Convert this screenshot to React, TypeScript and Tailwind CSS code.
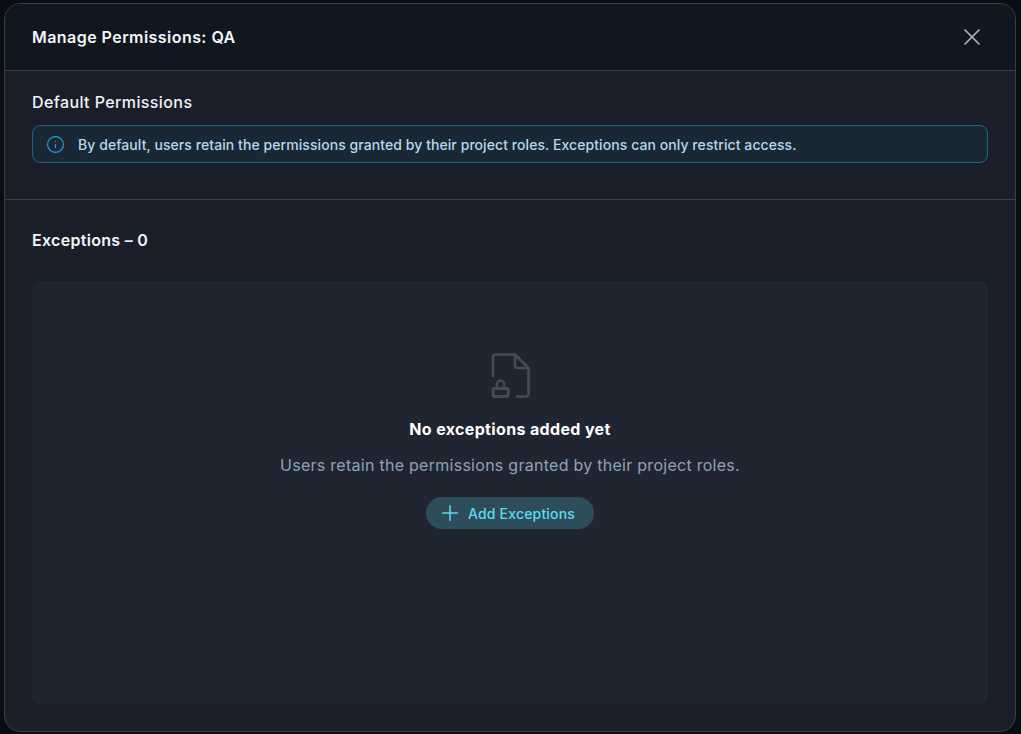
import { Info, X } from 'lucide-react';

function FileLockIcon() {
  return (
    <svg width="40" height="46" viewBox="0 0 40 46" fill="none" stroke="#454b56" strokeWidth="2.600" strokeLinejoin="round" strokeLinecap="round">
      <path d="M3 23V4A2.500 2.500 0 0 1 5.500 1.500H25L38.500 15V41A2.500 2.500 0 0 1 36 43.500H27" />
      <path d="M25 1.500V12.500A2.500 2.500 0 0 0 27.500 15H38.500" />
      <rect x="3.200" y="35.500" width="15" height="8" rx="1.500" strokeWidth="3" />
      <path d="M7 35.500V31.500A3.700 3.700 0 0 1 14.400 31.500V35.500" />
    </svg>
  );
}

function PlusIcon() {
  return (
    <svg width="16" height="16" viewBox="0 0 16 16" fill="none" stroke="currentColor" strokeWidth="1.5" strokeLinecap="round">
      <path d="M8 0.750V15.250M0.750 8H15.250" />
    </svg>
  );
}

export default function App() {
  return (
    <div className="h-[734px] w-[1021px] overflow-hidden bg-[#0b0d12] pl-1 pr-[5px] pt-[3px] pb-[2px] font-['Inter',sans-serif]">
      <div className="flex h-full flex-col overflow-hidden rounded-2xl border border-[#3a3e46] bg-[#191e29]">
        <div className="flex h-[67px] shrink-0 items-center justify-between border-b border-[#3a3e46] bg-[#111720] pl-[27px] pr-[29px]">
          <h2 className="text-[16px] leading-[20px] font-semibold tracking-[0.45px] text-[#f4f5f7]">Manage Permissions: QA</h2>
          <X className="h-[28px] w-[28px] text-[#aab2bd]" strokeWidth={1.5} />
        </div>

        <div className="flex h-[129px] shrink-0 flex-col border-b border-[#3a3e46] px-[27px] pt-[21px]">
          <h3 className="text-[16px] leading-[20px] font-medium tracking-[0.4px] text-[#f1f2f4]">Default Permissions</h3>
          <div className="mt-[13px] flex h-[38px] items-center gap-[13px] rounded-lg border border-[#1d6486] bg-[#1a2835] pl-[13px]">
            <Info className="h-[19px] w-[19px] text-[#1f9fd8]" strokeWidth={1.5} />
            <p className="text-[14px] font-medium tracking-[0.07px] text-[#b5d8ee]">By default, users retain the permissions granted by their project roles. Exceptions can only restrict access.</p>
          </div>
        </div>

        <div className="flex min-h-0 flex-1 flex-col px-[27px] pt-[30px] pb-[27px]">
          <h3 className="text-[16px] leading-[20px] font-semibold tracking-[0.3px] text-[#f4f5f7]">Exceptions – 0</h3>
          <div className="mt-[31px] flex flex-1 flex-col items-center rounded-lg bg-[#202631] pt-[72px]">
            <FileLockIcon />
            <p className="mt-[20px] text-[16px] leading-[20px] font-bold tracking-[0.35px] text-white">No exceptions added yet</p>
            <p className="mt-[16px] text-[16px] leading-[20px] tracking-[0.27px] text-[#8fa2b8]">Users retain the permissions granted by their project roles.</p>
            <button className="mt-[22px] flex h-[32px] w-[168px] items-center justify-center gap-[10px] rounded-full bg-[#2e4d5b] pr-[3px] text-[14px] font-medium tracking-[0.18px] text-[#5bdcf0]">
              <PlusIcon />
              Add Exceptions
            </button>
          </div>
        </div>
      </div>
    </div>
  );
}
